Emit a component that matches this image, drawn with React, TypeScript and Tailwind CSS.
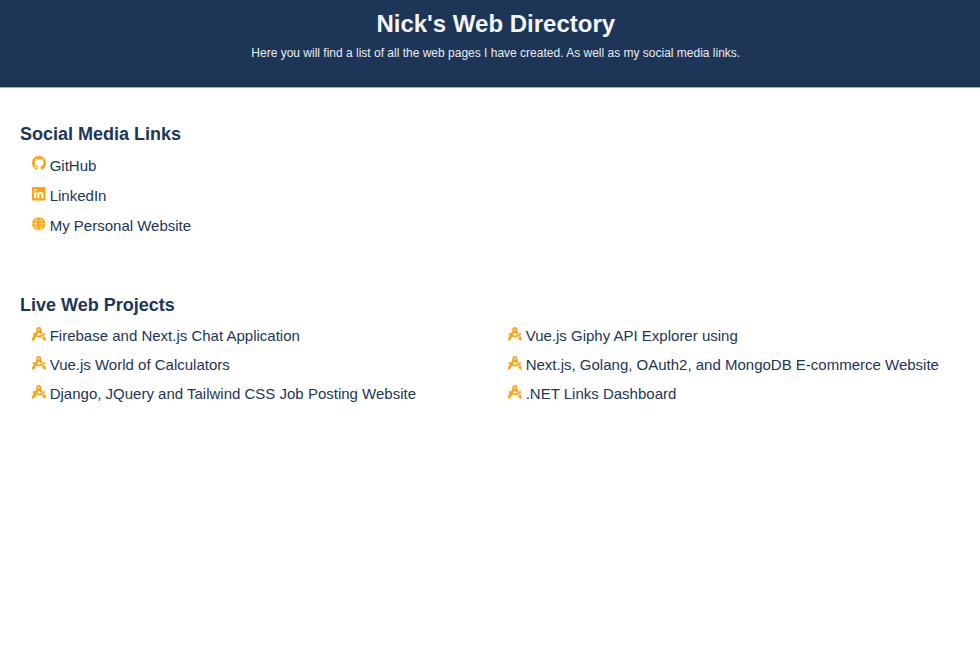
import { BsGithub, BsLinkedin } from "react-icons/bs";
import { FaCompassDrafting } from "react-icons/fa6";

const Globe = () => (
  <svg viewBox="0 0 14 14" className="size-[13.5px]">
    <circle cx="7" cy="7" r="7" fill="currentColor" />
    <g fill="none" stroke="white" strokeWidth="0.7">
      <path d="M0 7h14" />
      <ellipse cx="7" cy="7" rx="3.200" ry="7" />
      <path d="M1.500 3.500h11M1.500 10.500h11" strokeOpacity="0.4" />
    </g>
  </svg>
);

const social = [
  { label: "GitHub", icon: <BsGithub className="mt-[5px] size-[14px]" /> },
  { label: "LinkedIn", icon: <BsLinkedin className="mt-[6px] size-[13.5px]" /> },
  { label: "My Personal Website", icon: <span className="mt-[6px]"><Globe /></span> },
];

const projects = [
  "Firebase and Next.js Chat Application",
  "Vue.js Giphy API Explorer using",
  "Vue.js World of Calculators",
  "Next.js, Golang, OAuth2, and MongoDB E-commerce Website",
  "Django, JQuery and Tailwind CSS Job Posting Website",
  ".NET Links Dashboard",
];

export default function App() {
  return (
    <div className="min-h-screen bg-white font-['Liberation_Sans',Arial,sans-serif] text-[#1d3557]">
      <header className="h-[88px] border-b border-[#a5afbd] bg-[#1d3557] pt-2 pl-[11.5px] text-center text-[#f5f5f5]">
        <h1 className="text-2xl leading-8 font-bold">Nick's Web Directory</h1>
        <p className="mt-1 text-xs leading-[18px] text-[#e9ecef]">
          Here you will find a list of all the web pages I have created. As well as my social media links.
        </p>
      </header>
      <main className="px-5">
        <h2 className="pt-8 text-lg leading-7 font-bold">Social Media Links</h2>
        <ul className="mt-[3px] pl-3">
          {social.map(({ label, icon }) => (
            <li key={label} className="flex h-[30px] text-[15px] leading-[30px]">
              <span className="flex w-[17.7px] text-[#fca311]">{icon}</span>
              <a>{label}</a>
            </li>
          ))}
        </ul>
        <h2 className="mt-[50px] text-lg leading-7 font-bold">Live Web Projects</h2>
        <ul className="mt-[2px] grid grid-cols-[476px_1fr] pl-3">
          {projects.map((label) => (
            <li key={label} className="flex h-[29px] text-[15px] leading-[30px]">
              <span className="w-[17.7px] text-[#fca311]"><FaCompassDrafting className="mt-[6px] size-[13.7px]" /></span>
              <a>{label}</a>
            </li>
          ))}
        </ul>
      </main>
    </div>
  );
}
